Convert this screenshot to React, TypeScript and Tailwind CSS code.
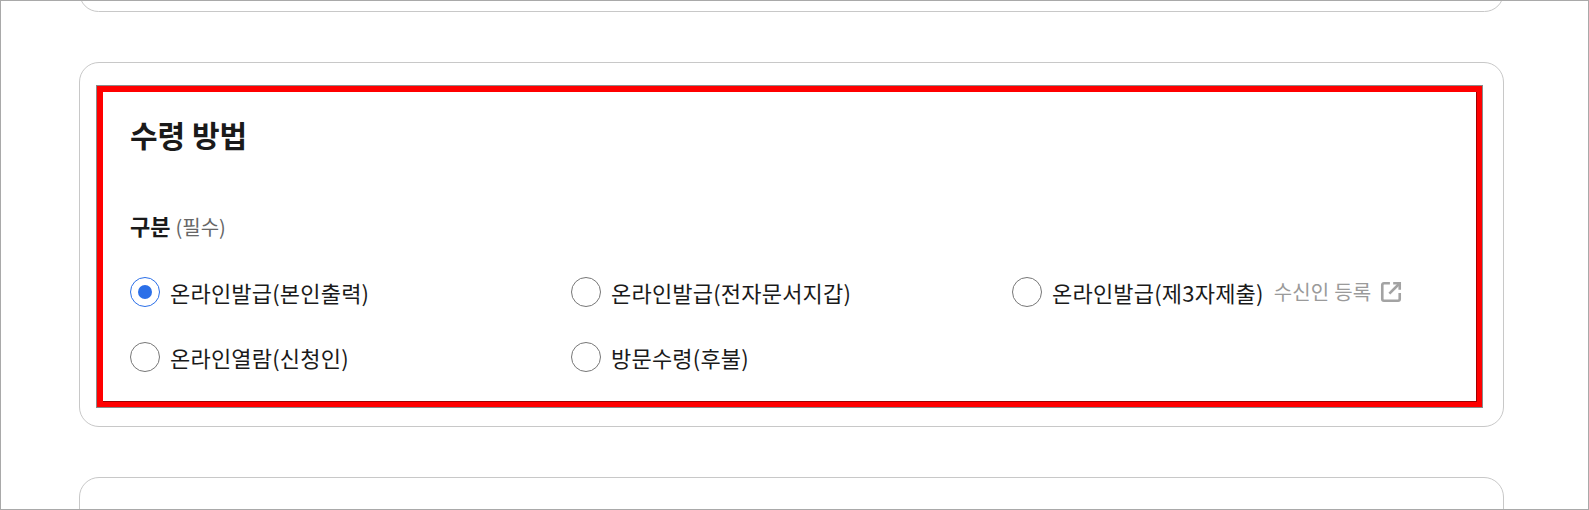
const fontStack = '"Noto Sans CJK KR", "Noto Sans", sans-serif';

const options = [
  { label: "온라인발급(본인출력)", checked: true },
  { label: "온라인발급(전자문서지갑)" },
  { label: "온라인발급(제3자제출)", link: "수신인 등록" },
  { label: "온라인열람(신청인)" },
  { label: "방문수령(후불)" },
];

function ExternalIcon() {
  return (
    <svg width="24" height="24" viewBox="0 0 22 22" fill="none" stroke="#a3a3a3" strokeWidth="2.4">
      <path d="M10 3H4.5A1.5 1.5 0 0 0 3 4.5v13A1.5 1.5 0 0 0 4.5 19h13a1.5 1.5 0 0 0 1.5-1.5V12" />
      <path d="M13 3h6v6" />
      <path d="M19 3 9.5 12.5" />
    </svg>
  );
}

function Radio({ checked }: { checked?: boolean }) {
  if (checked) {
    return (
      <span className="flex h-[30px] w-[30px] shrink-0 items-center justify-center rounded-full border border-[#2b6fe8]">
        <span className="h-[14px] w-[14px] rounded-full bg-[#2b6fe8]" />
      </span>
    );
  }
  return <span className="h-[30px] w-[30px] shrink-0 rounded-full border border-[#777777]" />;
}

export default function App() {
  return (
    <div
      className="flex h-[510px] flex-col overflow-hidden border border-[#a9a9a9] bg-white pl-[78px] text-[#1a1a1a]"
      style={{ fontFamily: fontStack }}
    >
      <div className="-mt-[28px] h-[39px] w-[1425px] shrink-0 rounded-[20px] border border-[#c8c8c8]" />

      <section className="mt-[50px] h-[365px] w-[1425px] shrink-0 rounded-[20px] border border-[#c8c8c8] pl-[17px] pt-[23px]">
        <div className="h-[321px] w-[1385px] border-t-[6px] border-r-[5px] border-b-[5px] border-l-[6px] border-[#ff0000] pl-[27px] pt-[21px] shadow-[0_0_0_1px_#8a8a8a,inset_-1px_-1px_0_#a00000]">
          <h2 className="text-[30px] font-bold leading-[42px]">수령 방법</h2>
          <div className="mt-[56px] flex items-baseline gap-[5px] leading-[28px]">
            <span className="text-[22px] font-bold">구분</span>
            <span className="text-[20px] text-[#666666]">(필수)</span>
          </div>
          <div className="mt-[36px] grid grid-cols-[441px_441px_1fr] gap-y-[35px]">
            {options.map((o) => (
              <label key={o.label} className="flex h-[30px] items-center">
                <Radio checked={o.checked} />
                <span className="ml-[10px] text-[22px] tracking-[0.2px]">{o.label}</span>
                {o.link && (
                  <span className="ml-[10px] flex items-center gap-[8px] text-[20px] tracking-[0.2px] text-[#9a9a9a]">
                    {o.link}
                    <ExternalIcon />
                  </span>
                )}
              </label>
            ))}
          </div>
        </div>
      </section>

      <div className="mt-[50px] h-[80px] w-[1425px] shrink-0 rounded-[20px] border border-[#c8c8c8]" />
    </div>
  );
}
